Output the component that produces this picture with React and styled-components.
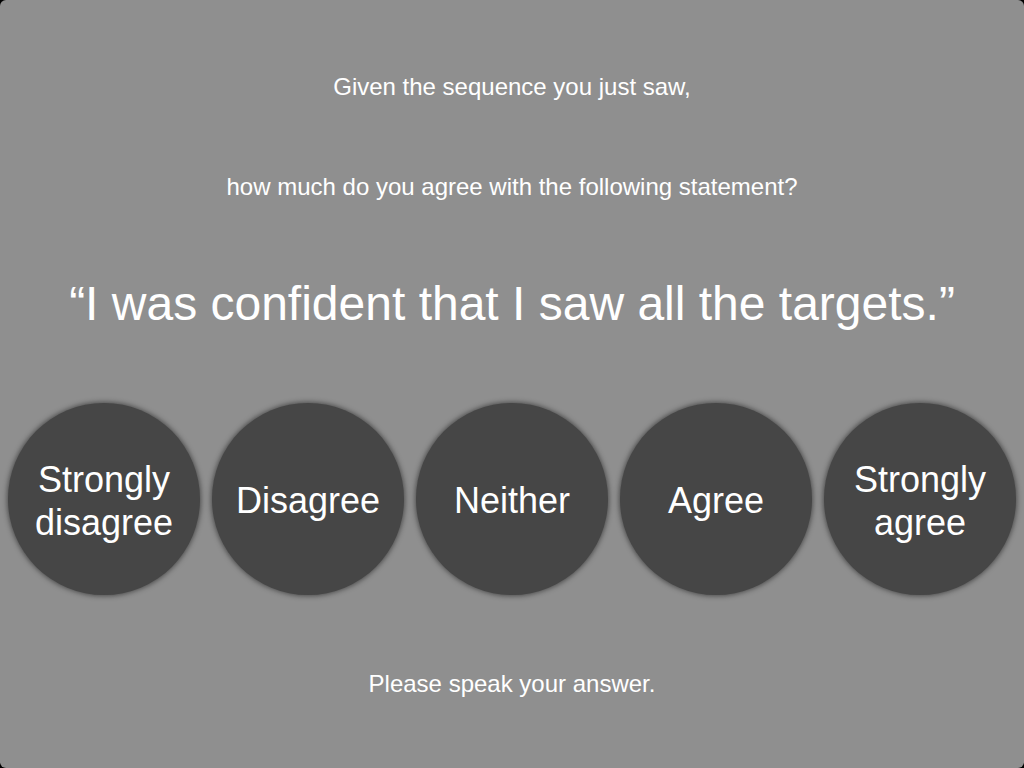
import React from 'react';
import styled, { createGlobalStyle } from 'styled-components';

const choices = [
  ['Strongly', 'disagree'],
  ['Disagree'],
  ['Neither'],
  ['Agree'],
  ['Strongly', 'agree'],
];

const App = () => (
  <>
    <GlobalStyle />
    <Screen>
      <Prompt>Given the sequence you just saw,</Prompt>
      <Prompt $top={72}>how much do you agree with the following statement?</Prompt>
      <Statement>“I was confident that I saw all the targets.”</Statement>
      <Choices>
        {choices.map((lines) => (
          <Choice key={lines.join(' ')}>
            {lines.map((line) => (
              <span key={line}>{line}</span>
            ))}
          </Choice>
        ))}
      </Choices>
      <Prompt $top={75}>Please speak your answer.</Prompt>
    </Screen>
  </>
);

const GlobalStyle = createGlobalStyle`
  html, body {
    margin: 0;
    padding: 0;
    background: #000;
  }
  body {
    font-family: "Liberation Sans", Arial, Helvetica, sans-serif;
  }
`;

const Screen = styled.div`
  width: 1024px;
  height: 768px;
  box-sizing: border-box;
  background-color: #8f8f8f;
  border-radius: 6px;
  overflow: hidden;
  display: flex;
  flex-direction: column;
  align-items: center;
  padding-top: 73px;
  color: #fff;
`;

const Prompt = styled.div`
  font-size: 24px;
  line-height: 28px;
  margin-top: ${(p) => p.$top || 0}px;
  text-align: center;
`;

const Statement = styled.div`
  font-size: 48px;
  line-height: 56px;
  margin-top: 75px;
  text-align: center;
`;

const Choices = styled.div`
  display: flex;
  gap: 12px;
  margin-top: 71px;
`;

const Choice = styled.div`
  width: 192px;
  height: 192px;
  box-sizing: border-box;
  padding-top: 3px;
  border-radius: 50%;
  background-color: #464646;
  box-shadow: 0 0 5px 1px rgba(30, 30, 30, 0.6);
  display: flex;
  flex-direction: column;
  align-items: center;
  justify-content: center;
  font-size: 36px;
  line-height: 43px;
  color: #fff;
  text-align: center;
`;

export default App;
